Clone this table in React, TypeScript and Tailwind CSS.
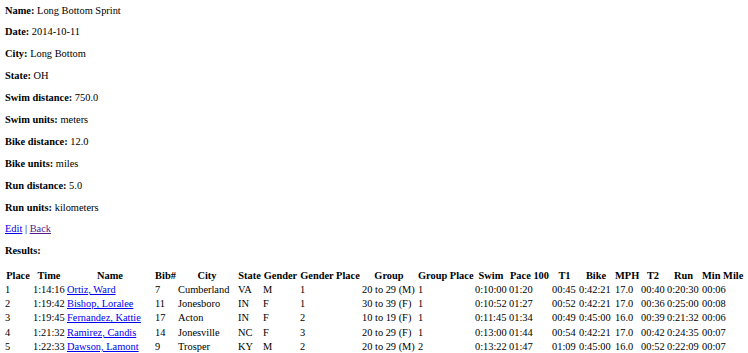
import React from "react";

const info: [string, string][] = [
  ["Name:", "Long Bottom Sprint"],
  ["Date:", "2014-10-11"],
  ["City:", "Long Bottom"],
  ["State:", "OH"],
  ["Swim distance:", "750.0"],
  ["Swim units:", "meters"],
  ["Bike distance:", "12.0"],
  ["Bike units:", "miles"],
  ["Run distance:", "5.0"],
  ["Run units:", "kilometers"],
];

const headers = [
  "Place", "Time", "Name", "Bib#", "City", "State", "Gender", "Gender Place",
  "Group", "Group Place", "Swim", "Pace 100", "T1", "Bike", "MPH", "T2", "Run", "Min Mile",
];

const rows: string[][] = [
  ["1", "1:14:16", "Ortiz, Ward", "7", "Cumberland", "VA", "M", "1", "20 to 29 (M)", "1", "0:10:00", "01:20", "00:45", "0:42:21", "17.0", "00:40", "0:20:30", "00:06"],
  ["2", "1:19:42", "Bishop, Loralee", "11", "Jonesboro", "IN", "F", "1", "30 to 39 (F)", "1", "0:10:52", "01:27", "00:52", "0:42:21", "17.0", "00:36", "0:25:00", "00:08"],
  ["3", "1:19:45", "Fernandez, Kattie", "17", "Acton", "IN", "F", "2", "10 to 19 (F)", "1", "0:11:45", "01:34", "00:49", "0:45:00", "16.0", "00:39", "0:21:32", "00:06"],
  ["4", "1:21:32", "Ramirez, Candis", "14", "Jonesville", "NC", "F", "3", "20 to 29 (F)", "1", "0:13:00", "01:44", "00:54", "0:42:21", "17.0", "00:42", "0:24:35", "00:07"],
  ["5", "1:22:33", "Dawson, Lamont", "9", "Trosper", "KY", "M", "2", "20 to 29 (M)", "2", "0:13:22", "01:47", "01:09", "0:45:00", "16.0", "00:52", "0:22:09", "00:07"],
];

export default function App() {
  return (
    <div
      className="min-h-[353px] bg-white text-black px-[5px] pt-[4.5px] text-[10.4px] leading-[11.5px]"
      style={{ fontFamily: '"Liberation Serif", "Times New Roman", serif' }}
    >
      <div className="flex flex-col gap-[10.4px]">
        {info.map(([k, v]) => (
          <p key={k}>
            <strong className="font-bold">{k}</strong> {v}
          </p>
        ))}
        <p>
          <a href="#" className="text-[#0000EE] underline">Edit</a> |{" "}
          <a href="#" className="text-[#551A8B] underline">Back</a>
        </p>
        <p>
          <strong className="font-bold">Results:</strong>
        </p>
      </div>
      <table className="mt-[11.8px] w-[738px] table-fixed border-separate border-spacing-0 leading-[12.3px]">
        <colgroup>
          <col className="w-[28px]" />
          <col className="w-[34px]" />
          <col className="w-[88px]" />
          <col className="w-[23px]" />
          <col className="w-[60px]" />
          <col className="w-[25px]" />
          <col className="w-[37px]" />
          <col className="w-[62px]" />
          <col className="w-[56px]" />
          <col className="w-[57px]" />
          <col className="w-[34px]" />
          <col className="w-[43px]" />
          <col className="w-[27px]" />
          <col className="w-[36px]" />
          <col className="w-[26px]" />
          <col className="w-[26px]" />
          <col className="w-[35px]" />
          <col className="w-[41px]" />
        </colgroup>
        <thead>
          <tr>
            {headers.map((h) => (
              <th key={h} className="py-[1px] pl-0 pr-[2px] font-bold text-center whitespace-nowrap">
                {h}
              </th>
            ))}
          </tr>
        </thead>
        <tbody>
          {rows.map((r) => (
            <tr key={r[0]}>
              {r.map((c, i) => (
                <td key={i} className="py-[1px] pl-0 pr-[2px] text-left whitespace-nowrap">
                  {i === 2 ? (
                    <a href="#" className="text-[#0000EE] underline">{c}</a>
                  ) : (
                    c
                  )}
                </td>
              ))}
            </tr>
          ))}
        </tbody>
      </table>
    </div>
  );
}
